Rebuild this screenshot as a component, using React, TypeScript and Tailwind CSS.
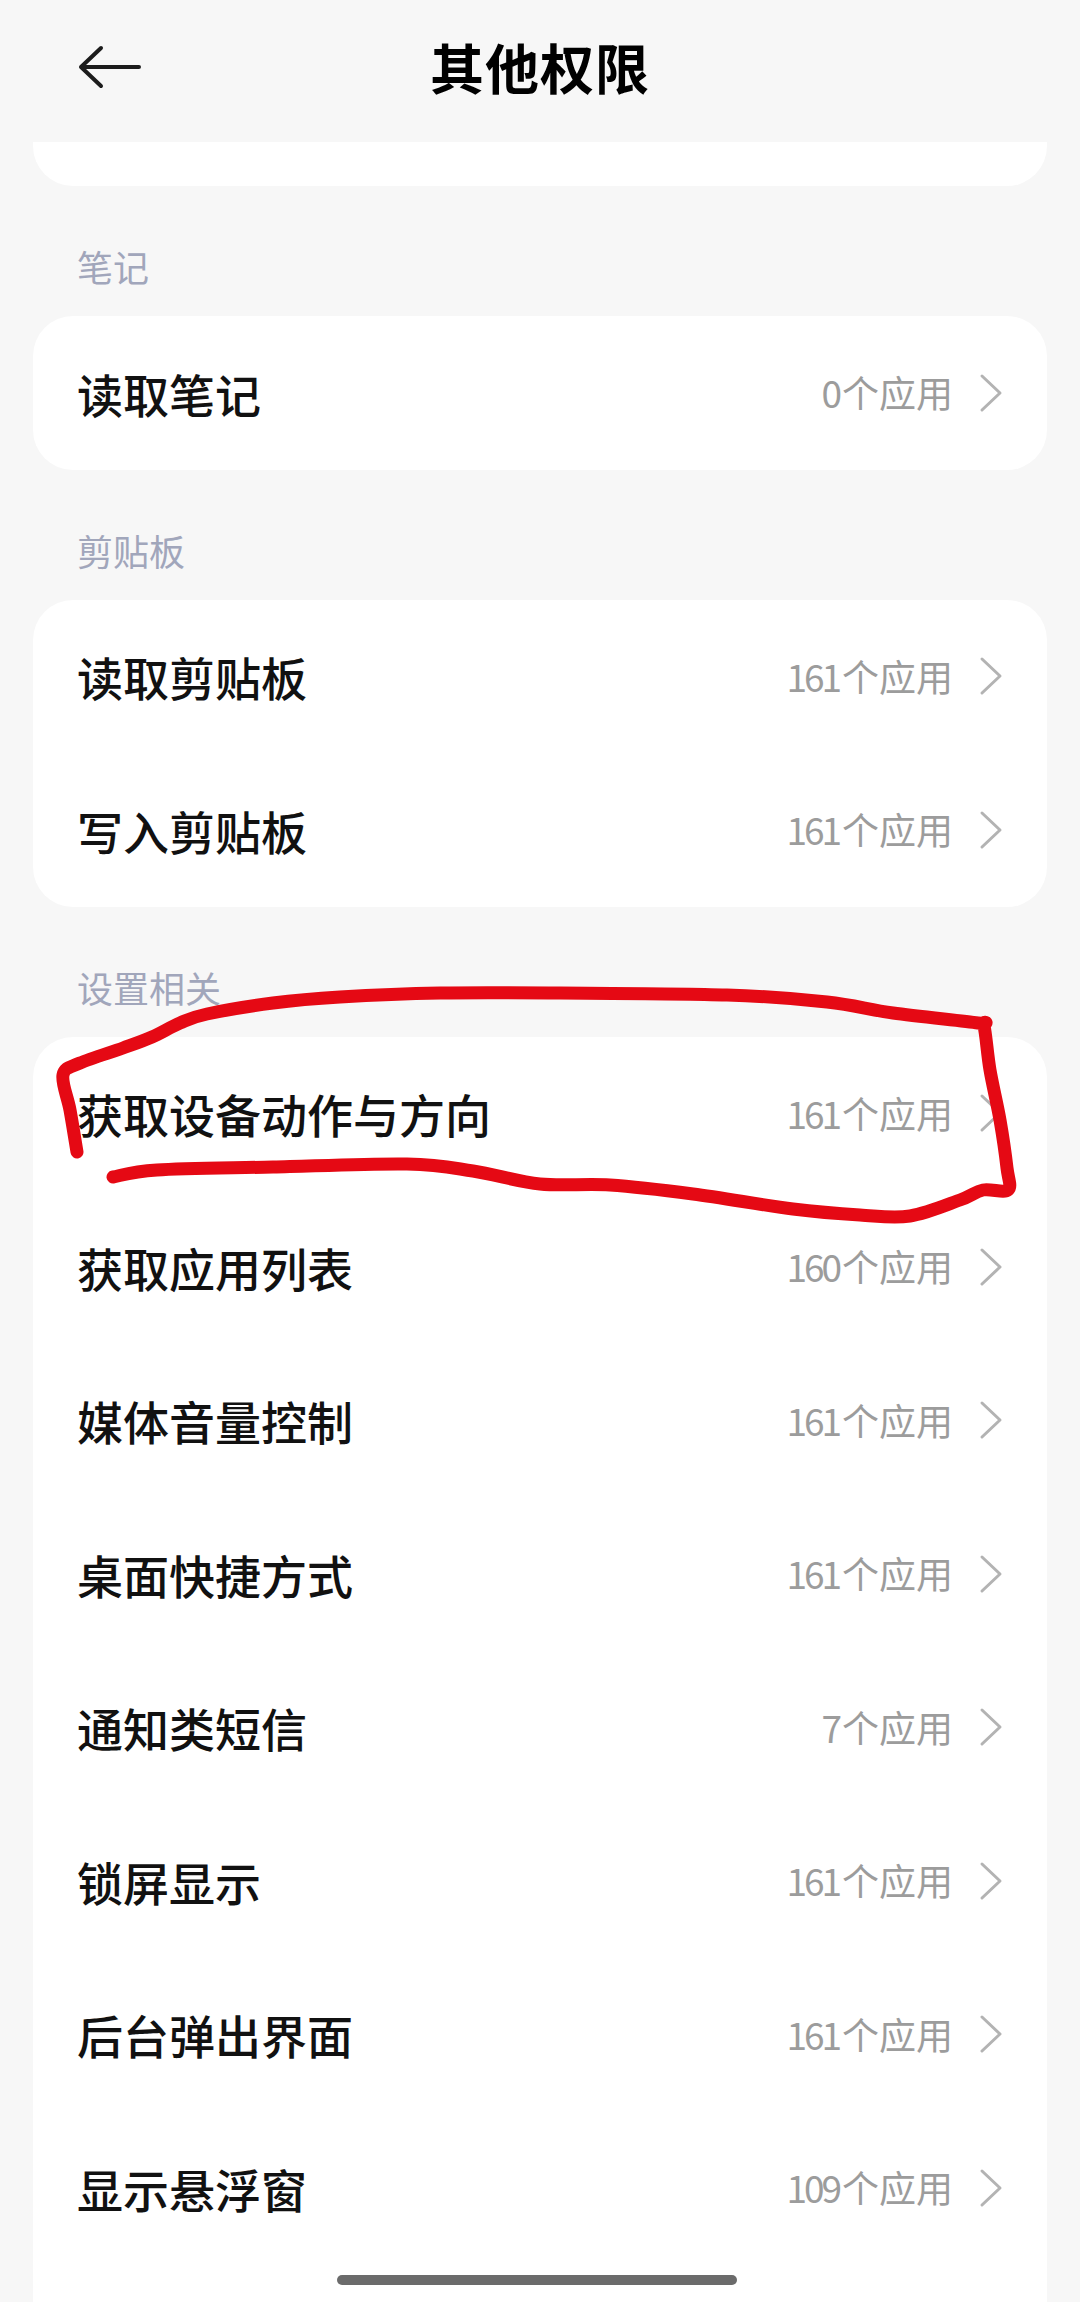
import React from 'react'

type Row = { title: string; count: number }
type Section = { label: string; rows: Row[] }

const SECTIONS: Section[] = [
  { label: '笔记', rows: [{ title: '读取笔记', count: 0 }] },
  {
    label: '剪贴板',
    rows: [
      { title: '读取剪贴板', count: 161 },
      { title: '写入剪贴板', count: 161 },
    ],
  },
  {
    label: '设置相关',
    rows: [
      { title: '获取设备动作与方向', count: 161 },
      { title: '获取应用列表', count: 160 },
      { title: '媒体音量控制', count: 161 },
      { title: '桌面快捷方式', count: 161 },
      { title: '通知类短信', count: 7 },
      { title: '锁屏显示', count: 161 },
      { title: '后台弹出界面', count: 161 },
      { title: '显示悬浮窗', count: 109 },
    ],
  },
]

// hand-drawn red loop around the first row of 设置相关
const MARK: [number, number][] = [
  [77, 1152], [70, 1110], [63, 1075], [80, 1063], [123, 1048], [152, 1037], [180, 1023],
  [207, 1014], [273, 1003], [340, 997], [440, 993], [560, 993], [727, 995], [827, 1002],
  [893, 1013], [978, 1023], [984, 1026], [990, 1070], [1000, 1120], [1007, 1168], [1008, 1190],
  [983, 1190], [960, 1200], [910, 1216], [860, 1215], [793, 1209], [693, 1194], [610, 1185],
  [540, 1184], [473, 1171], [407, 1164], [273, 1167], [157, 1170], [113, 1177],
]

function smooth(pts: [number, number][]) {
  let d = `M${pts[0][0]},${pts[0][1]}`
  for (let i = 0; i < pts.length - 1; i++) {
    const p0 = pts[i - 1] ?? pts[i]
    const p1 = pts[i]
    const p2 = pts[i + 1]
    const p3 = pts[i + 2] ?? p2
    const c1 = [p1[0] + (p2[0] - p0[0]) / 6, p1[1] + (p2[1] - p0[1]) / 6]
    const c2 = [p2[0] - (p3[0] - p1[0]) / 6, p2[1] - (p3[1] - p1[1]) / 6]
    d += ` C${c1[0]},${c1[1]} ${c2[0]},${c2[1]} ${p2[0]},${p2[1]}`
  }
  return d
}

function Chevron() {
  return (
    <svg width="24" height="40" viewBox="0 0 24 40" className="shrink-0">
      <polyline points="3,3 21,20 3,37" fill="none" stroke="#b3b3b3" strokeWidth="3" strokeLinecap="round" strokeLinejoin="round" />
    </svg>
  )
}

export default function App() {
  return (
    <div
      className="relative w-[1080px] h-[2302px] overflow-hidden bg-[#f7f7f7]"
      style={{ fontFamily: '"Noto Sans CJK SC", "Noto Sans", sans-serif' }}
    >
      <div className="relative h-[142px] flex items-center justify-center">
        <svg width="64" height="44" viewBox="0 0 64 44" className="absolute left-[78px] top-[45px]">
          <path d="M3 22 H61 M23 3 L3 22 L23 41" fill="none" stroke="#1c1c1c" strokeWidth="4" strokeLinecap="round" strokeLinejoin="round" />
        </svg>
        <h1 className="text-[54px] font-bold text-black leading-none tracking-[1px] -mt-[8px]">其他权限</h1>
      </div>

      <div className="mx-[33px] h-[44px] bg-white rounded-b-[40px]" />

      {SECTIONS.map((section, si) => (
        <div key={section.label}>
          <div className="h-[130px] pl-[77px] pt-[62px] text-[36px] leading-[36px] text-[#a1a6bb]">{section.label}</div>
          <div className={si === SECTIONS.length - 1 ? 'mx-[33px] bg-white rounded-t-[40px] pb-[80px]' : 'mx-[33px] bg-white rounded-[40px]'}>
            {section.rows.map(row => (
              <div key={row.title} className="h-[153.5px] flex items-center pl-[44px] pr-[44px]">
                <span className="flex-1 text-[46px] leading-none font-medium text-[#111]">{row.title}</span>
                <span className="text-[37px] leading-none text-[#9c9c9c] mr-[26px]">
                  <span className="tracking-[-3px] mr-[3px]">{row.count}</span>个应用
                </span>
                <Chevron />
              </div>
            ))}
          </div>
        </div>
      ))}

      <svg className="absolute inset-0 pointer-events-none" width="1080" height="2302" viewBox="0 0 1080 2302">
        <path d={smooth(MARK)} fill="none" stroke="#e50914" strokeWidth="13" strokeLinecap="round" strokeLinejoin="round" />
      </svg>

      <div className="absolute left-[337px] top-[2275px] w-[400px] h-[10px] rounded-full bg-[#6b6b6b]" />
    </div>
  )
}
